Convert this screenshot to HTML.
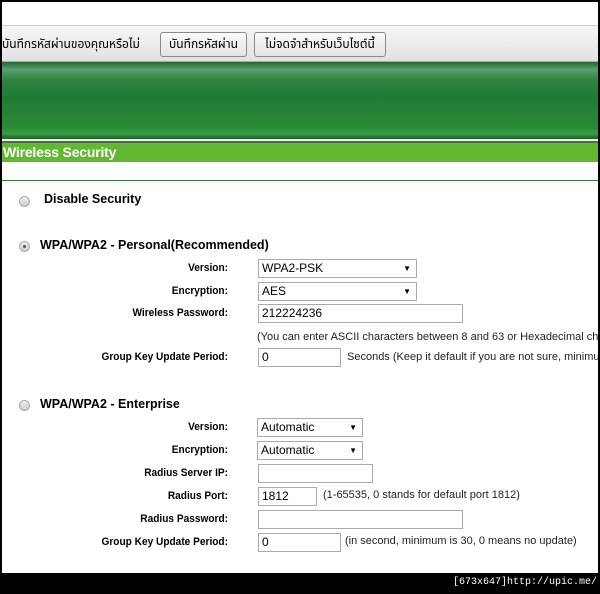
<!DOCTYPE html>
<html><head><meta charset="utf-8"><style>
*{margin:0;padding:0;box-sizing:border-box}
body{width:600px;height:594px;background:#000;position:relative;overflow:hidden;font-family:"Liberation Sans",Arial,sans-serif;font-size:11px;color:#000}
.a{position:absolute}
.page{left:2px;top:2px;width:596px;height:571px;background:#fff;overflow:hidden}
.tb{left:0;top:23px;width:596px;height:37px;background:linear-gradient(#f6f6f6,#e2e2e2);border-top:1px solid #ccc;border-bottom:1px solid #aaa}
.th{font-family:"Liberation Sans","Noto Sans Thai","Noto Sans CJK SC",sans-serif;font-size:12px}
.btn{border:1px solid #8a8a8a;border-radius:3px;background:linear-gradient(#fbfbfb,#e4e4e4);height:25px;line-height:23px;text-align:center}
.ban{left:0;top:60px;width:596px;height:77px;background:linear-gradient(#1f6b30 0%,#5b9f70 10%,#2f8540 22%,#207a35 45%,#2a8a38 85%,#3a9a45 93%,#1d5e2a 100%)}
.hd{left:0;top:139px;width:596px;height:21px;background:#62b832;border-top:2px solid #3f7a28;color:#fff;font-weight:bold;font-size:14px;line-height:18px;padding-left:1px;letter-spacing:-0.2px}
.lbl{font-weight:bold;text-align:right;width:226px;left:0;font-size:11px;transform:scaleX(0.92);transform-origin:right center;margin-top:-1px}
.rad{width:11px;height:11px;border-radius:50%;border:1px solid #aaa;background:linear-gradient(#eee,#ccc)}
.rad.on::after{content:"";position:absolute;left:3px;top:3px;width:3px;height:3px;border-radius:50%;background:#555}
.inp{border:1px solid #aaa;background:#fff;height:19px;padding-left:3px;line-height:17px;font-size:12px}
.sel{border:1px solid #aaa;background:#fff;height:19px;padding-left:3px;line-height:17px;font-size:12px}
.sel::after{content:"▼";position:absolute;right:5px;top:0;font-size:8px}
.t{font-size:11px;color:#222}
.bt{font-weight:bold;font-size:12.5px}
</style></head><body>
<div class="a page">
<div class="a tb">
 <div class="a th" style="left:0;top:10px">บันทึกรหัสผ่านของคุณหรือไม่</div>
 <div class="a btn th" style="left:158px;top:6px;width:87px">บันทึกรหัสผ่าน</div>
 <div class="a btn th" style="left:252px;top:6px;width:132px">ไม่จดจำสำหรับเว็บไซต์นี้</div>
</div>
<div class="a ban"></div>
<div class="a hd">Wireless Security</div>
<div class="a" style="left:0;top:178px;width:596px;height:1px;background:#3a7a3a"></div>

<div class="a rad" style="left:17px;top:194px"></div>
<div class="a bt" style="left:42px;top:190px">Disable Security</div>
<div class="a rad on" style="left:17px;top:239px"></div>
<div class="a bt" style="left:38px;top:236px">WPA/WPA2 - Personal(Recommended)</div>
<div class="a lbl" style="top:261px">Version:</div>
<div class="a sel" style="left:256px;top:257px;width:159px">WPA2-PSK</div>
<div class="a lbl" style="top:284px">Encryption:</div>
<div class="a sel" style="left:256px;top:280px;width:159px">AES</div>
<div class="a lbl" style="top:306px">Wireless Password:</div>
<div class="a inp" style="left:256px;top:302px;width:205px">212224236</div>
<div class="a t" style="left:255px;top:329px;white-space:nowrap">(You can enter ASCII characters between 8 and 63 or Hexadecimal characters</div>
<div class="a lbl" style="top:350px">Group Key Update Period:</div>
<div class="a inp" style="left:256px;top:346px;width:83px">0</div>
<div class="a t" style="left:345px;top:349px;white-space:nowrap">Seconds (Keep it default if you are not sure, minimum</div>

<div class="a rad" style="left:17px;top:398px"></div>
<div class="a bt" style="left:38px;top:395px">WPA/WPA2 - Enterprise</div>
<div class="a lbl" style="top:420px">Version:</div>
<div class="a sel" style="left:255px;top:416px;width:106px">Automatic</div>
<div class="a lbl" style="top:443px">Encryption:</div>
<div class="a sel" style="left:255px;top:439px;width:106px">Automatic</div>
<div class="a lbl" style="top:466px">Radius Server IP:</div>
<div class="a inp" style="left:256px;top:462px;width:115px"></div>
<div class="a lbl" style="top:489px">Radius Port:</div>
<div class="a inp" style="left:256px;top:485px;width:59px">1812</div>
<div class="a t" style="left:321px;top:487px">(1-65535, 0 stands for default port 1812)</div>
<div class="a lbl" style="top:512px">Radius Password:</div>
<div class="a inp" style="left:256px;top:508px;width:205px"></div>
<div class="a lbl" style="top:535px">Group Key Update Period:</div>
<div class="a inp" style="left:256px;top:531px;width:83px">0</div>
<div class="a t" style="left:343px;top:533px">(in second, minimum is 30, 0 means no update)</div>
</div>
<div class="a" style="left:453px;top:577px;color:#fff;font-family:'Liberation Mono',monospace;font-size:10px;white-space:nowrap">[673x647]http://upic.me/</div>
</body></html>
